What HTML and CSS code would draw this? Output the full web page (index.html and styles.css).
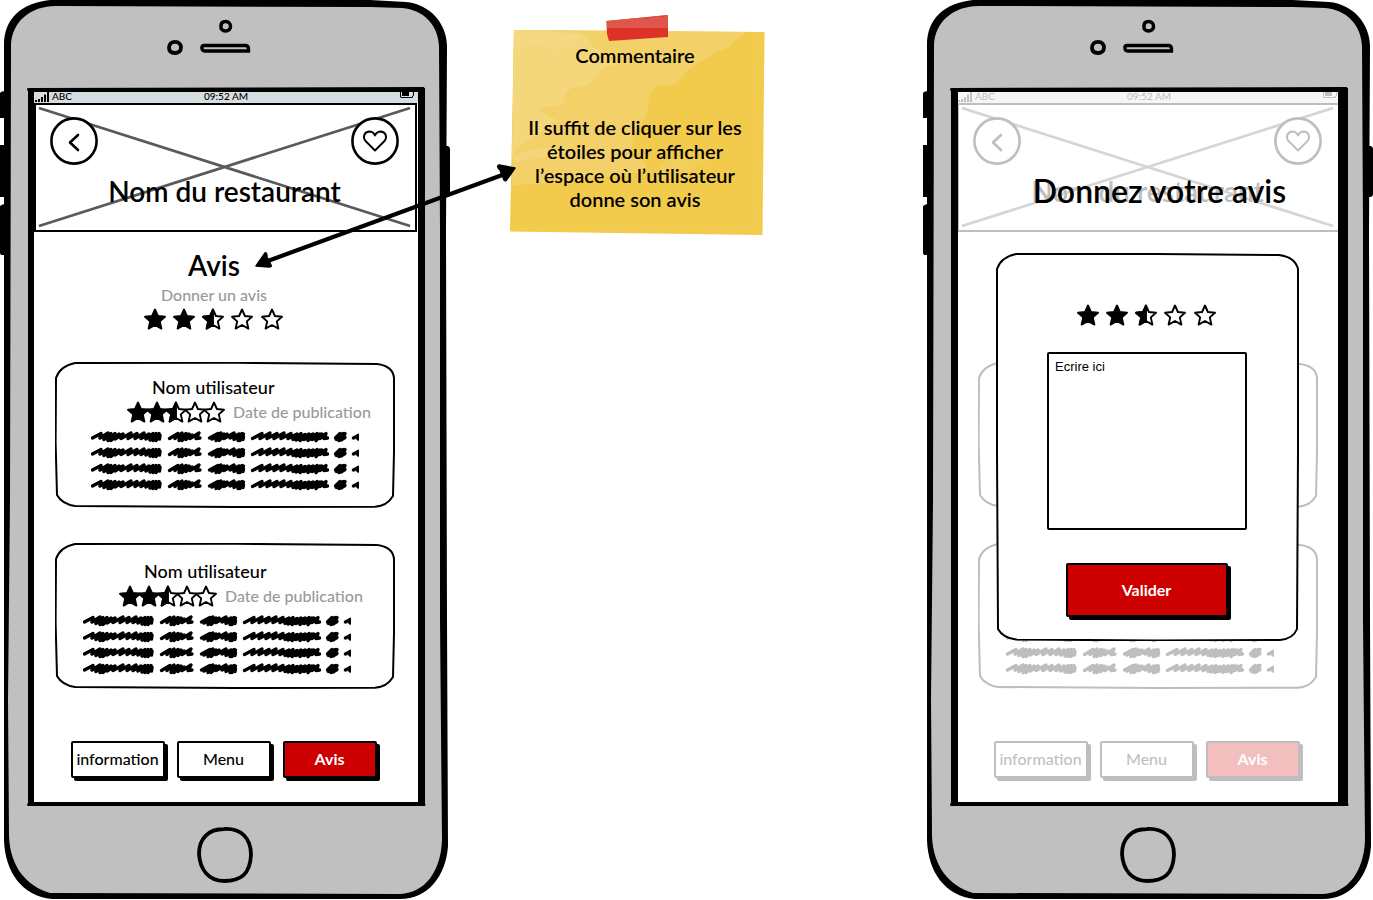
FILE: index.html
```html
<!DOCTYPE html>
<html lang="fr">
<head>
<meta charset="utf-8">
<title>Avis du restaurant</title>
<link rel="stylesheet" href="styles.css">
</head>
<body>
<svg class="defs" aria-hidden="true">
  <defs>
    <path id="star" d="M11 1.500 L13.900 8 L21 8.800 L15.800 13.400 L17.400 20.600 L11 17 L4.600 20.600 L6.200 13.400 L1 8.800 L8.100 8 Z"/>
    <path id="half" d="M11 1.500 V17 L4.600 20.600 L6.200 13.400 L1 8.800 L8.100 8 Z"/>
    <symbol id="stars-wide" viewBox="0 0 140 22">
      <g stroke="#000" stroke-width="1.900" stroke-linejoin="round" fill="none">
        <use href="#star" fill="#000"/><use href="#star" x="29" fill="#000"/>
        <use href="#star" x="58"/><use href="#half" x="58" fill="#000"/>
        <use href="#star" x="87"/><use href="#star" x="117"/>
      </g>
    </symbol>
    <symbol id="stars-tight" viewBox="0 0 98 22">
      <g stroke="#000" stroke-width="1.900" stroke-linejoin="round" fill="none">
        <use href="#star" fill="#000"/><use href="#star" x="19" fill="#000"/>
        <use href="#star" x="38"/><use href="#half" x="38" fill="#000"/>
        <use href="#star" x="57"/><use href="#star" x="76"/>
        <path d="M8 8.600H34M20 9.500H29"/>
      </g>
    </symbol>
    <g id="scribble-row" fill="none" stroke="#000" stroke-width="3.400" stroke-linecap="round" stroke-linejoin="round">
      <path d="M1.500 8 L10 3.500 L9 8 L17 3 L13 9.500 L20 3.500 L17 10.500 L24 3.500 L20 10.500 L28 4 L24 9 L32 4 L30 8.500 L40 3 L37 8.500 L46 3.500 L44 8.500 L53 3 L50 8.500 L58 4 L55 9 L62 3.500 L59 10 L65 3.500 L62 10.500 L68 3.500 L65 10.500 L69 5 L68.500 9"/>
      <path d="M78.500 8.500 L87 3.500 L84 8.500 L91 3 L88 10.500 L95 3.500 L91 10.500 L98 4 L95 9.500 L101 5 L99 8.500 L108 3 L105 8.500 L109 8"/>
      <path d="M118.500 8 L127 3.500 L121 9 L130 3 L125 10.500 L133 4 L128 10.500 L136 4 L133 8.500 L143 3 L139 8 L148 4 L143 9.500 L151 3.500 L147 10.500 L152.500 4 L149 10.500 L152.500 6.500 L152 9.500"/>
      <path d="M161.500 8.500 L171 3.500 L169 8.500 L179 3 L176 8.500 L186 3.500 L183 8.500 L193 3 L190 8.500 L200 3.500 L197 8.500 L206 4 L202 9.500 L210 3.500 L205 10 L214 4.500 L209 10.500 L218 4 L213 9.500 L222 4 L217 10.500 L226 3.500 L221 9.500 L229 4 L225 10.500 L231 4 L229 8.500 L235 3.500 L233 8.500 L236.500 8"/>
      <path d="M244.500 8 L249 3.500 L245.500 9.500 L252 3.500 L248 10.500 L254 3.500 L250 10 L254 7.500"/>
      <path d="M262.500 8 L271 3.500 L267 9"/>
    </g>
    <symbol id="scribble" viewBox="0 0 268 62">
      <use href="#scribble-row"/><use href="#scribble-row" y="16"/>
      <use href="#scribble-row" y="32"/><use href="#scribble-row" y="48"/>
    </symbol>
    <symbol id="device" viewBox="0 0 450 900" preserveAspectRatio="none">
      <path d="M0 93 Q1 91 6 91 V118 H0ZM0 145H6V197H0ZM0 206Q2 204 6 204V255H1L0 253ZM444 146H448Q450 147 450 149V194Q450 197 447 197H444Z"/>
      <path d="M4 45 C4 18 22 3 50 0 L370 0 L406 2 C430 4 447 24 447 46 L446 230 L447 620 L448 846 C446 876 428 899 400 899 L52 899 C22 896 5 872 4 840 Z"/>
      <path fill="#c0c0c0" d="M11 45 C12 22 30 6 56 6 L370 7 L402 8 C424 10 438 25 439 46 L440 230 L440 620 L442 840 C441 870 426 893 400 894 L50 893 C26 886 10 866 9 836 L8 700 L10 500 Z"/>
      <g fill="none" stroke="#000" stroke-linecap="round">
        <path stroke-width="3" d="M28.500 89.500 L423 88.500 M28.500 804.500 L424 804.500"/>
        <path stroke-width="3.500" d="M225.500 21.500 C229 21.500 230.500 24 230.500 26.500 C230.500 29 228.500 31 225.500 31 C222.500 31 220.500 29 221 26 C221 23.500 222.500 21.500 225.500 21.500Z"/>
        <path stroke-width="3.800" d="M175 41.800 C179 41.800 181 44.500 181 47.500 C181 51 178.500 53 175 53 C171 53 169 51 169 47.500 C169 44 171.500 41.800 175 41.800Z"/>
        <path stroke-width="3.400" d="M204 45.500 H246 Q249 46 248.500 51 H205 Q201.500 51 202 47.500 Q202 45.500 204 45.500Z"/>
        <path stroke-width="3.800" d="M224 829 C241 828 251 838 251 855 C250 874 241 881 224 881 C209 881 200 870 199 854 C199 839 208 829 224 829Z"/>
      </g>
    </symbol>
    <symbol id="status-signal" viewBox="0 0 14 10">
      <path d="M0 8h2v2H0zM3 7h2v3H3zM6 5h2v5H6zM9 2.500h2V10H9zM12 0h2v10h-2z"/>
    </symbol>
    <symbol id="status-battery" viewBox="0 0 14 9">
      <path fill="none" stroke="#000" d="M.5 0V5Q.5 5.500 1 5.500H12Q12.500 5.500 12.500 5V4L13.500 3.500V0"/><path d="M2 0H9V4H2Z"/>
    </symbol>
    <symbol id="back" viewBox="0 0 48 48">
      <circle cx="24" cy="24" r="22.600" fill="#fff" stroke="#000" stroke-width="2.600"/>
      <path d="M28 18 L20 25.500 L28 33" fill="none" stroke="#000" stroke-width="2.600" stroke-linecap="round" stroke-linejoin="round"/>
    </symbol>
    <symbol id="heart" viewBox="0 0 48 48">
      <circle cx="24" cy="24" r="22.600" fill="#fff" stroke="#000" stroke-width="2.600"/>
      <path d="M24 33.500 L14.500 24 C11.500 20.500 13 15 18 14.500 C21 14.500 23 16 24 18.500 C25 16 27 14.500 30 14.500 C35 15 36.500 20.500 33.500 24 Z" fill="none" stroke="#000" stroke-width="1.900" stroke-linejoin="round"/>
    </symbol>
  </defs>
</svg>

<main class="board">
  <section class="phone">
    <svg class="shape"><use href="#device"/></svg>
    <div class="screen">
      <div class="app">
        <div class="status"><svg class="signal"><use href="#status-signal"/></svg><span class="carrier">ABC</span><span>09:52 AM</span><svg class="battery"><use href="#status-battery"/></svg></div>
        <header class="hero">
          <svg class="shape" viewBox="0 0 382 126" preserveAspectRatio="none"><path class="cross" d="M3 3 L377 122 M377 3 L3 122"/></svg>
          <div class="actions">
            <button class="round" aria-label="Retour"><svg><use href="#back"/></svg></button>
            <button class="round" aria-label="Favori"><svg><use href="#heart"/></svg></button>
          </div>
          <h1 class="title">Nom du restaurant</h1>
        </header>
        <div class="summary">
          <h2 class="heading">Avis</h2>
          <p class="muted">Donner un avis</p>
          <button class="rate" aria-label="Donner une note"><svg><use href="#stars-wide"/></svg></button>
        </div>
        <article class="card">
          <svg class="shape" viewBox="0 0 340 146" preserveAspectRatio="none"><path class="outline" d="M20 1 L180 .8 L322 2 Q338 4 339 16 L339 90 L338 134 Q332 144 320 144.700 L180 145 L20 144 Q7 142 2 133 L.6 80 L1 16 Q5 4 20 1Z"/></svg>
          <h3 class="user">Nom utilisateur</h3>
          <div class="meta"><svg class="tight" role="img" aria-label="2,5 sur 5"><use href="#stars-tight"/></svg><span class="muted">Date de publication</span></div>
          <svg class="scribble"><use href="#scribble"/></svg>
        </article>
        <article class="card second">
          <svg class="shape" viewBox="0 0 340 146" preserveAspectRatio="none"><path class="outline" d="M20 1 L180 .8 L322 2 Q338 4 339 16 L339 90 L338 134 Q332 144 320 144.700 L180 145 L20 144 Q7 142 2 133 L.6 80 L1 16 Q5 4 20 1Z"/></svg>
          <h3 class="user">Nom utilisateur</h3>
          <div class="meta"><svg class="tight" role="img" aria-label="2,5 sur 5"><use href="#stars-tight"/></svg><span class="muted">Date de publication</span></div>
          <svg class="scribble"><use href="#scribble"/></svg>
        </article>
        <nav class="tabs">
          <button class="tab">information</button>
          <button class="tab">Menu</button>
          <button class="tab red">Avis</button>
        </nav>
      </div>
    </div>
  </section>

  <aside class="note">
    <svg class="shape" viewBox="0 0 255 223" preserveAspectRatio="none">
      <path fill="#f2ca4c" d="M4 16 L254.500 18 L252.500 222 L0 218.500Z"/>
      <path fill="#f3d168" d="M4 16 L236 18 Q230 24 222 29 Q218 38 206 38 Q200 44 186 50 Q174 60 168 68 Q162 72 148 72 Q138 80 138 94 Q134 110 124 122 L120 144 Q142 148 134 158 L110 162 L60 168 L2 172Z"/>
      <path fill="#f4d67b" d="M4 16 L72 19 Q80 24 84 34 Q98 38 100 48 Q112 46 108 52 Q94 52 92 56 Q84 68 76 72 Q58 72 55 82 L54 90 Q46 92 30 94 Q24 96 48 107 Q36 114 30 120 L6 135 L2 145Z"/>
      <path fill="#f5da8a" opacity=".5" d="M8 40 Q20 24 45 36 Q66 36 73 22 L40 17 L5 17ZM2 145Q20 132 62 134 Q64 138 40 142 L6 149Z"/>
      <path fill="#f4d67b" opacity=".35" d="M145 168 Q146 148 166 144 L205 145 Q180 152 172 167ZM246 160 L252 144 L251 158Z"/>
      <path fill="none" stroke="#f6d970" opacity=".4" d="M245 20V221M2 216H250"/>
      <path fill="#de3128" d="M96.500 7 L158 1 V23 L99 27 L97 20Z"/>
      <path fill="#df564b" d="M96.500 7 L158 1 V14 H97Z"/>
      <path fill="#de3128" d="M135 4l5-.5q-2 2-5 .5ZM149 2.500l5-.5q-2 2-5 .5Z"/>
    </svg>
    <h2 class="note-title">Commentaire</h2>
    <p class="note-text">Il suffit de cliquer sur les<br>étoiles pour afficher<br>l’espace où l’utilisateur<br>donne son avis</p>
  </aside>

  <section class="phone modal-phone">
    <svg class="shape"><use href="#device"/></svg>
    <div class="screen">
      <div class="app dim" inert>
        <div class="status"><svg class="signal"><use href="#status-signal"/></svg><span class="carrier">ABC</span><span>09:52 AM</span><svg class="battery"><use href="#status-battery"/></svg></div>
        <header class="hero">
          <svg class="shape" viewBox="0 0 382 126" preserveAspectRatio="none"><path class="cross" d="M3 3 L377 122 M377 3 L3 122"/></svg>
          <div class="actions">
            <button class="round" aria-label="Retour"><svg><use href="#back"/></svg></button>
            <button class="round" aria-label="Favori"><svg><use href="#heart"/></svg></button>
          </div>
          <h1 class="title">Nom du restaurant</h1>
        </header>
        <div class="summary"></div>
        <article class="card">
          <svg class="shape" viewBox="0 0 340 146" preserveAspectRatio="none"><path class="outline" d="M20 1 L180 .8 L322 2 Q338 4 339 16 L339 90 L338 134 Q332 144 320 144.700 L180 145 L20 144 Q7 142 2 133 L.6 80 L1 16 Q5 4 20 1Z"/></svg>
        </article>
        <article class="card second">
          <svg class="shape" viewBox="0 0 340 146" preserveAspectRatio="none"><path class="outline" d="M20 1 L180 .8 L322 2 Q338 4 339 16 L339 90 L338 134 Q332 144 320 144.700 L180 145 L20 144 Q7 142 2 133 L.6 80 L1 16 Q5 4 20 1Z"/></svg>
          <div class="spacer"></div>
          <svg class="scribble"><use href="#scribble"/></svg>
        </article>
        <nav class="tabs">
          <button class="tab">information</button>
          <button class="tab">Menu</button>
          <button class="tab red">Avis</button>
        </nav>
      </div>
      <div class="overlay">
        <h2 class="overlay-title">Donnez votre avis</h2>
        <form class="dialog">
          <svg class="shape" viewBox="0 0 303 388" preserveAspectRatio="none"><path class="outline filled" d="M20 1 L160 1 L283 2 Q299 4 302 16 L302 200 L301 376 Q297 386 284 387 L160 387.500 L20 386.500 Q7 385 2 376 L1 200 L1 16 Q5 4 20 1Z"/></svg>
          <button type="button" class="rate" aria-label="Donner une note"><svg><use href="#stars-wide"/></svg></button>
          <textarea class="review" aria-label="Votre avis">Ecrire ici</textarea>
          <button type="button" class="tab red submit">Valider</button>
        </form>
      </div>
    </div>
  </section>

  <svg class="arrow" viewBox="0 0 264 110" aria-hidden="true">
    <path d="M12 102 L252 14" stroke="#000" stroke-width="4.200" fill="none"/>
    <path d="M3 106 L12 93 Q14 92 14 97 L18 105 Q19 107 16 107ZM262 8 L246 5 Q243 6 247 10 L251 20 Q253 22 255 18Z" stroke="#000" stroke-width="1.500" stroke-linejoin="round"/>
  </svg>
</main>
</body>
</html>
```
FILE: styles.css
```css
* { box-sizing: border-box; }
body { margin: 0; background: #fff; color: #000; font-family: Lato, "Open Sans", sans-serif; font-weight: 500; }
h1, h2, h3, p { margin: 0; font-weight: 600; }
button, textarea { font: inherit; color: inherit; margin: 0; }
svg { display: block; overflow: hidden; }
.defs { position: absolute; width: 0; height: 0; }
.shape { position: absolute; inset: 0; width: 100%; height: 100%; }
.outline { fill: none; stroke: #000; stroke-width: 2; }
.filled { fill: #fff; }

.board { position: relative; display: flex; justify-content: space-between; align-items: flex-start; }
.phone { position: relative; flex: none; width: 450px; padding: 88px 25px 94px 28px; }
.screen { position: relative; display: flex; flex-direction: column; border: solid #000; border-width: 4px 7px 4px 6px; background: #fff; }
.modal-phone .screen { border-left-width: 7px; border-right-width: 10px; }
.app { overflow: hidden; padding-bottom: 24px; }
.dim { opacity: .25; margin: 0 0 0 -1px; }
.modal-phone .app { width: 384px; clip-path: inset(0 3px 0 1px); }

.status { position: relative; display: flex; justify-content: center; height: 11px; background: #d6dee1; font-size: 10px; line-height: 8px; }
.signal { position: absolute; left: 1px; top: 0; width: 14px; height: 10px; }
.carrier { position: absolute; left: 18px; }
.battery { position: absolute; right: 4px; top: 0; width: 14px; height: 9px; }
.hero { position: relative; border: 2px solid #000; margin-right: 1px; height: 129px; padding: 12px 16px 0 14px; }
.cross { fill: none; stroke: #5a5a5a; stroke-width: 2.8; }
.actions { position: relative; display: flex; justify-content: space-between; }
.round { width: 48px; height: 48px; padding: 0; border: 0; border-radius: 50%; background: none; }
.round svg { width: 48px; height: 48px; }
.title { position: relative; font-size: 28px; line-height: 32px; margin-top: 10px; text-align: center; }

.summary { display: flex; flex-direction: column; align-items: center; height: 130px; padding: 17px 24px 0 0; }
.heading { font-size: 28px; line-height: 32px; }
.muted { color: #999; font-size: 16px; line-height: 24px; font-weight: 500; }
.summary .muted { margin-top: 2px; }
.rate { padding: 0; border: 0; background: none; }
.rate svg { width: 140px; height: 22px; }
.summary .rate { margin-top: 1px; }

.card { position: relative; margin: 0 23px 35px 21px; height: 146px; padding: 13px 0 0 36px; }
.second { padding: 16px 0 0 28px; margin-bottom: 52px; }
.user { padding-left: 61px; font-size: 18px; line-height: 24px; font-weight: 500; }
.meta { display: flex; align-items: center; gap: 8px; height: 26px; padding-left: 36px; white-space: nowrap; }
.tight { width: 98px; height: 22px; }
.scribble { width: 268px; height: 62px; margin-top: 5px; }
.spacer { height: 50px; }

.tabs { display: flex; gap: 12px; padding-left: 37px; }
.tab { width: 94px; height: 37px; padding: 0 1px 2px 0; border: 2px solid #000; border-radius: 2px; background: #fff; box-shadow: 3px 3px 0 #000; font-size: 16px; }
.red { background: #c00; color: #fff; font-weight: 700; }

.overlay { position: absolute; inset: 0; }
.overlay-title { padding: 79px 0 0 23px; text-align: center; font-size: 32px; line-height: 40px; }
.dialog { position: relative; display: flex; flex-direction: column; align-items: center; width: 303px; height: 388px; margin: 42px auto 0 38px; padding: 51px 1px 0 0; }
.dialog .rate { position: relative; }
.review { position: relative; width: 200px; height: 178px; margin: 26px 0 33px; padding: 5px 6px; border: 2px solid #000; border-radius: 2px; background: #fff; resize: none; outline: 0; font: 13px/16px "Liberation Sans", Arial, sans-serif; }
.submit { position: relative; width: 162px; height: 54px; }

.note { position: relative; flex: none; width: 255px; margin: 14px auto 0 60px; padding: 29px 5px 25px 0; text-align: center; }
.note-title { position: relative; font-size: 20px; line-height: 24px; }
.note-text { position: relative; margin-top: 48px; font-size: 20px; line-height: 24px; white-space: nowrap; }
.arrow { position: absolute; left: 253px; top: 160px; width: 264px; height: 110px; }
```
